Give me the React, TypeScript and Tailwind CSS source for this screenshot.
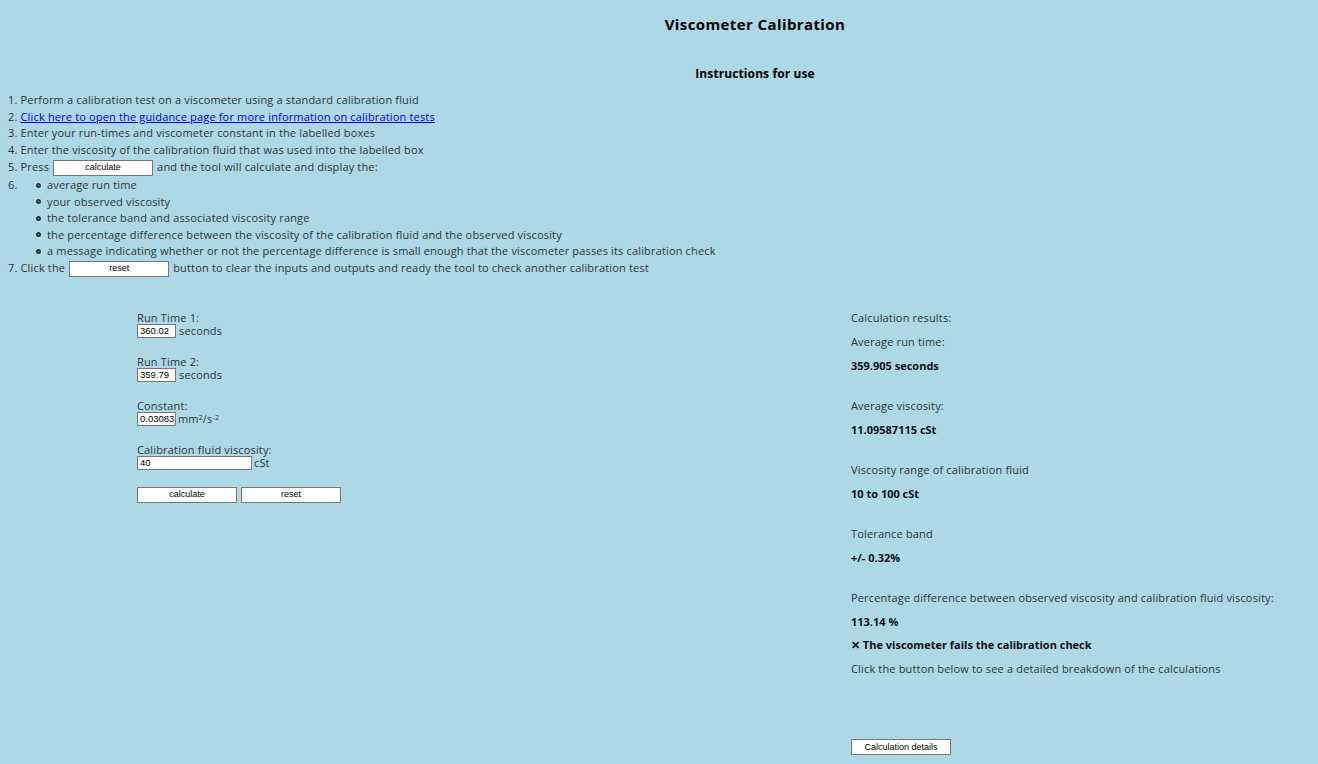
import React from 'react'

const font = { fontFamily: '"Open Sans", "Liberation Sans", sans-serif' }

function SmallButton({ label, w = 'w-[100px]' }: { label: string; w?: string }) {
  return (
    <button
      className={`${w} h-[16px] bg-white border border-[#767676] text-[9px] leading-none tracking-normal text-black font-['Liberation_Sans',sans-serif]`}
    >
      {label}
    </button>
  )
}

function Field({ value, w }: { value: string; w: string }) {
  return (
    <span
      className={`${w} inline-block h-[14px] bg-white border border-[#767676] pl-[2px] text-[9.5px] leading-[12px] tracking-normal text-black font-['Liberation_Sans',sans-serif] align-middle`}
    >
      {value}
    </span>
  )
}

function Bullet({ children }: { children: React.ReactNode }) {
  return (
    <li className="flex items-center h-[16.5px]">
      <span className="w-[5px] h-[5px] rounded-full border-2 border-[#333] mr-[6px] ml-[28px]"></span>
      <span>{children}</span>
    </li>
  )
}

export default function App() {
  return (
    <div className="min-h-[764px] w-full bg-[#add8e6] text-[#333] text-[11px] tracking-[0.16px]" style={font}>
      <div className="pl-[192px] text-center pt-[14px] tracking-normal">
        <h1 className="text-[15px] tracking-[0.4px] font-bold text-black leading-[20px]">Viscometer Calibration</h1>
        <h2 className="mt-[30px] text-[12px] tracking-[0.1px] font-bold text-black leading-[20px]">Instructions for use</h2>
      </div>

      <div className="pl-[8px] mt-[8px] leading-[16.5px]">
        <div>1. Perform a calibration test on a viscometer using a standard calibration fluid</div>
        <div>
          2. <a className="text-[#0000ee] underline">Click here to open the guidance page for more information on calibration tests</a>
        </div>
        <div>3. Enter your run-times and viscometer constant in the labelled boxes</div>
        <div>4. Enter the viscosity of the calibration fluid that was used into the labelled box</div>
        <div className="flex items-center h-[18px]">
          <span>5. Press&nbsp;</span>
          <span className="ml-[1px] mr-[4px]"><SmallButton label="calculate" /></span>
          <span>and the tool will calculate and display the:</span>
        </div>
        <div className="flex mt-[1px]">
          <span className="w-0">6.</span>
          <ul>
            <Bullet>average run time</Bullet>
            <Bullet>your observed viscosity</Bullet>
            <Bullet>the tolerance band and associated viscosity range</Bullet>
            <Bullet>the percentage difference between the viscosity of the calibration fluid and the observed viscosity</Bullet>
            <Bullet>a message indicating whether or not the percentage difference is small enough that the viscometer passes its calibration check</Bullet>
          </ul>
        </div>
        <div className="flex items-center h-[17px]">
          <span>7. Click the&nbsp;</span>
          <span className="ml-[1px] mr-[4px]"><SmallButton label="reset" /></span>
          <span>button to clear the inputs and outputs and ready the tool to check another calibration test</span>
        </div>
      </div>

      <div className="flex mt-[34px]">
        <div className="pl-[137px] w-[851px] leading-[13px]">
          <div>Run Time 1:</div>
          <div className="flex items-center gap-[3px]">
            <Field value="360.02" w="w-[39px]" />
            <span>seconds</span>
          </div>
          <div className="mt-[17px]">Run Time 2:</div>
          <div className="flex items-center gap-[3px]">
            <Field value="359.79" w="w-[39px]" />
            <span>seconds</span>
          </div>
          <div className="mt-[17px]">Constant:</div>
          <div className="flex items-center gap-[2px]">
            <Field value="0.03083" w="w-[39px]" />
            <span>
              mm<sup className="text-[7px]">2</sup>/s<sup className="text-[7px]">-2</sup>
            </span>
          </div>
          <div className="mt-[17px]">Calibration fluid viscosity:</div>
          <div className="flex items-center gap-[2px]">
            <Field value="40" w="w-[115px]" />
            <span>cSt</span>
          </div>
          <div className="flex gap-[4px] mt-[17px]">
            <SmallButton label="calculate" />
            <SmallButton label="reset" />
          </div>
        </div>

        <div className="leading-[13px]">
          <div>Calculation results:</div>
          <div className="mt-[11px]">Average run time:</div>
          <div className="mt-[11px] font-bold tracking-normal text-[#111]">359.905 seconds</div>
          <div className="mt-[27px]">Average viscosity:</div>
          <div className="mt-[11px] font-bold tracking-normal text-[#111]">11.09587115 cSt</div>
          <div className="mt-[27px]">Viscosity range of calibration fluid</div>
          <div className="mt-[11px] font-bold tracking-normal text-[#111]">10 to 100 cSt</div>
          <div className="mt-[27px]">Tolerance band</div>
          <div className="mt-[11px] font-bold tracking-normal text-[#111]">+/- 0.32%</div>
          <div className="mt-[27px]">Percentage difference between observed viscosity and calibration fluid viscosity:</div>
          <div className="mt-[11px] font-bold tracking-normal text-[#111]">113.14 %</div>
          <div className="mt-[10px] font-bold tracking-normal text-[#111]">✕ The viscometer fails the calibration check</div>
          <div className="mt-[11px]">Click the button below to see a detailed breakdown of the calculations</div>
          <div className="mt-[64px]">
            <SmallButton label="Calculation details" />
          </div>
        </div>
      </div>
    </div>
  )
}
